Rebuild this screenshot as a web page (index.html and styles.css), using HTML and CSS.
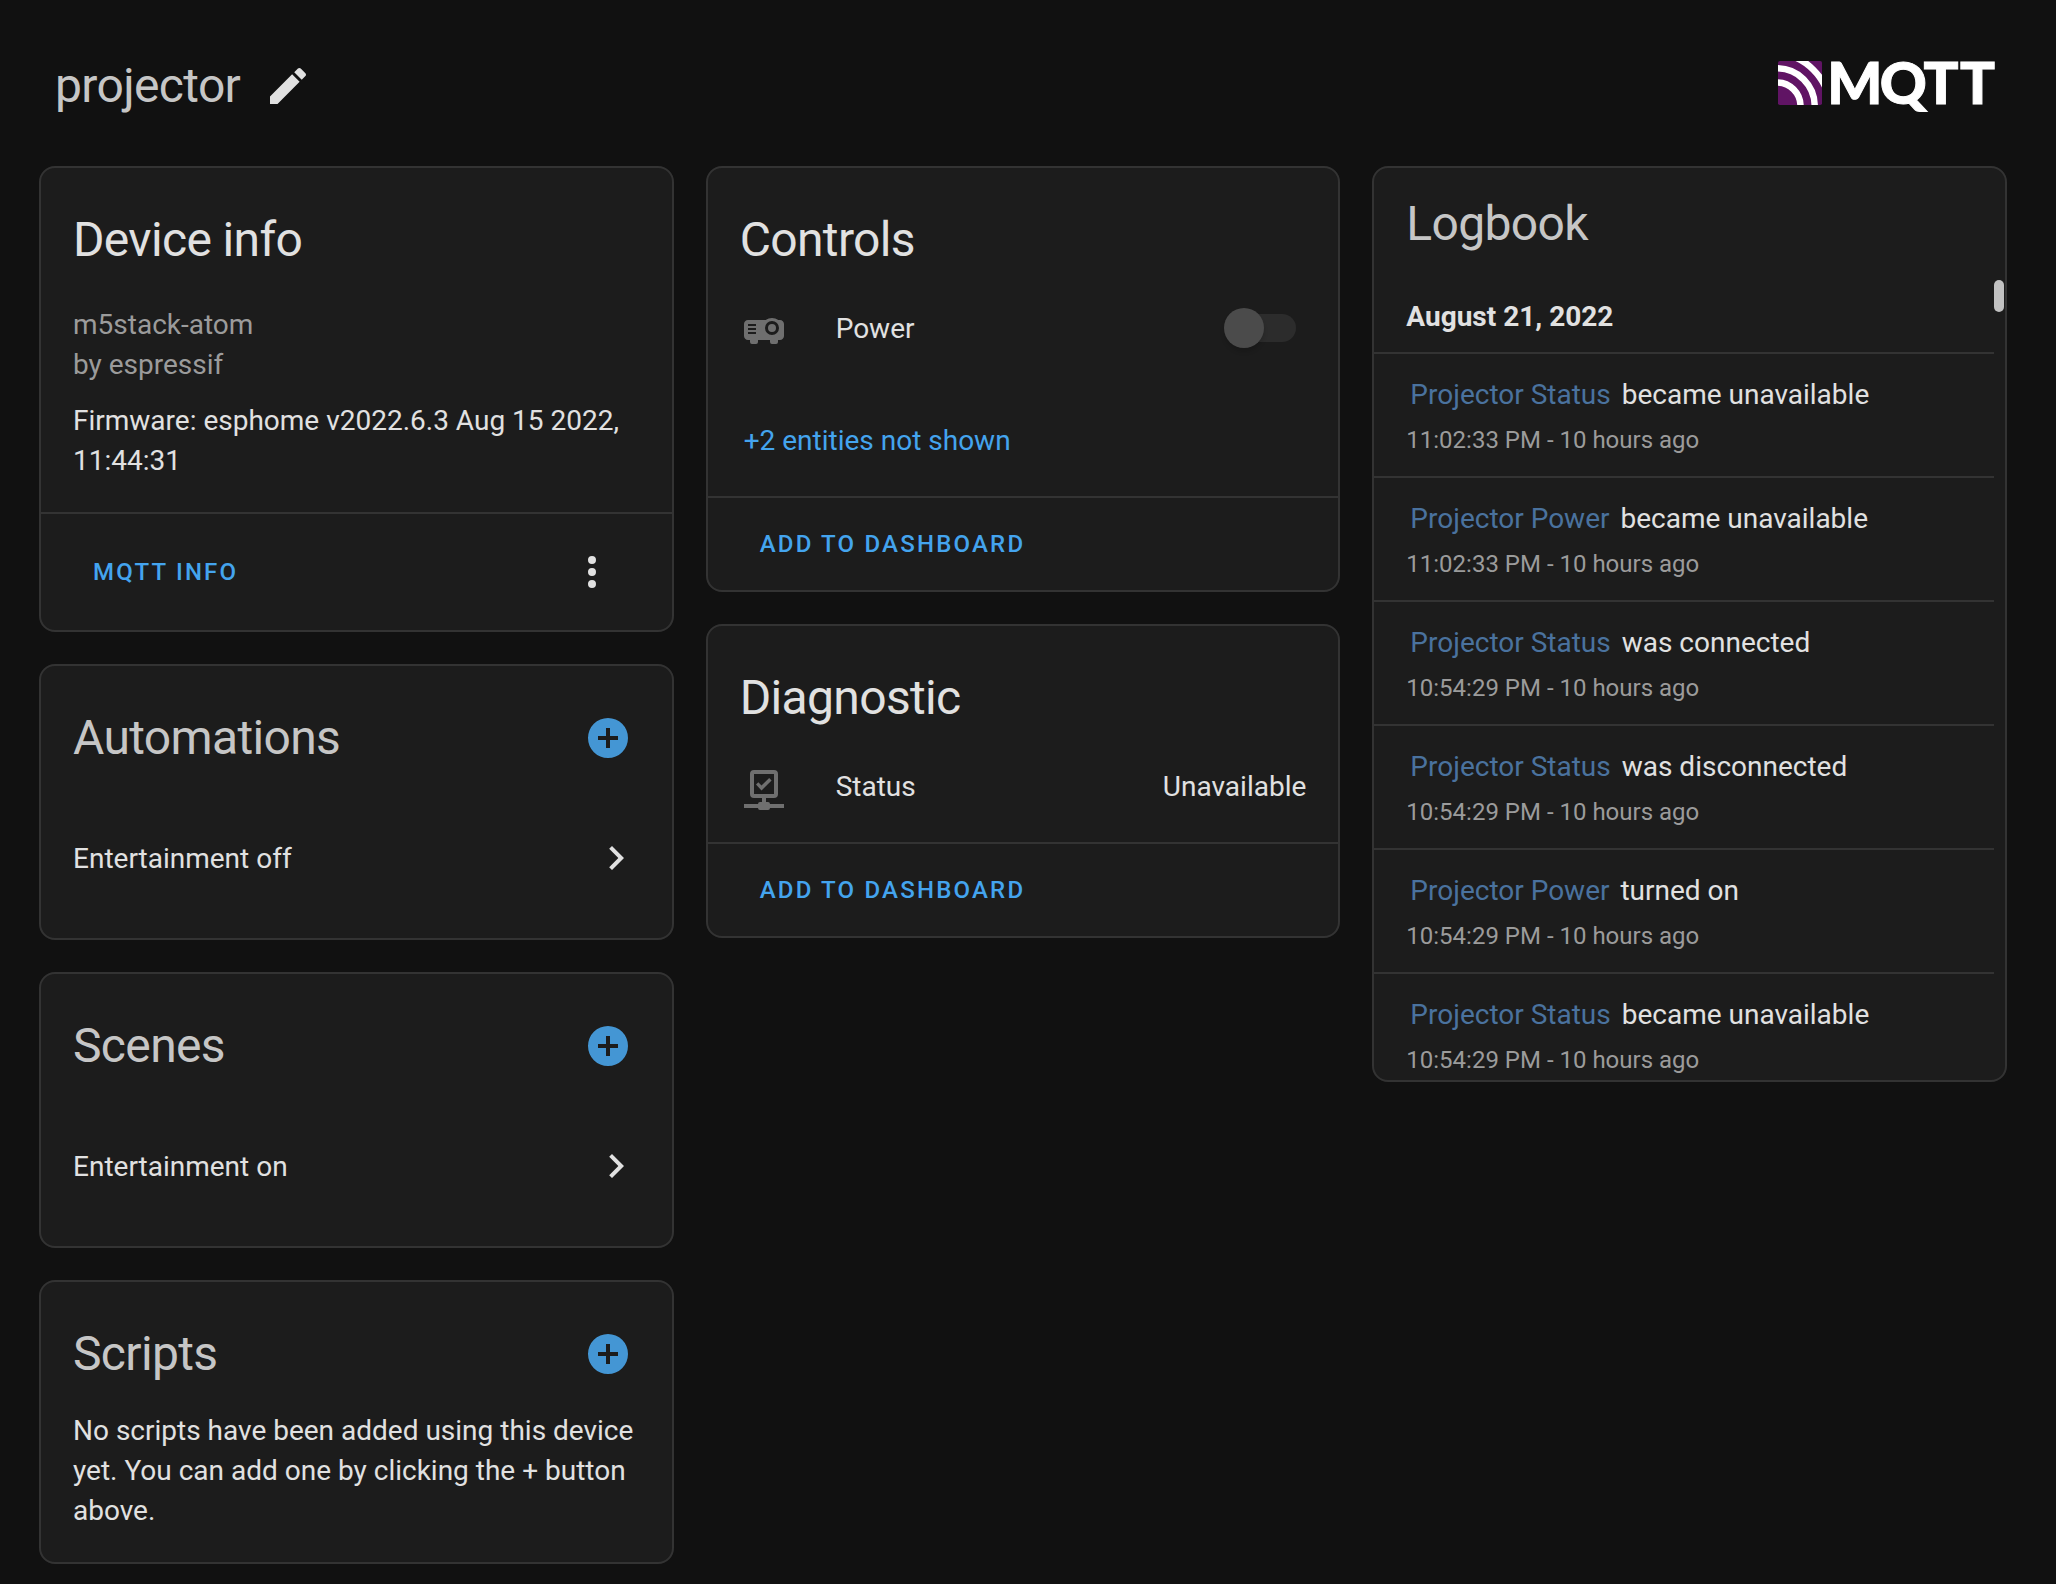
FILE: index.html
```html
<!DOCTYPE html>
<html lang="en">
<head>
<meta charset="utf-8">
<title>projector</title>
<link rel="stylesheet" href="styles.css">
</head>
<body>
<svg class="defs" width="0" height="0" aria-hidden="true">
  <symbol id="plus-circle" viewBox="0 0 24 24"><path d="M17,13H13V17H11V13H7V11H11V7H13V11H17M12,2A10,10 0 0,0 2,12A10,10 0 0,0 12,22A10,10 0 0,0 22,12A10,10 0 0,0 12,2Z"/></symbol>
  <symbol id="chevron" viewBox="0 0 24 24"><path d="M8.59,16.58L13.17,12L8.59,7.41L10,6L16,12L10,18L8.59,16.58Z"/></symbol>
</svg>
<header class="header">
  <h1 class="title">projector</h1>
  <svg class="icon" viewBox="0 0 24 24"><path d="M20.71,7.04C21.1,6.65 21.1,6 20.71,5.63L18.37,3.29C18,2.9 17.35,2.9 16.96,3.29L15.12,5.12L18.87,8.87M3,17.25V21H6.75L17.81,9.93L14.06,6.18L3,17.25Z"/></svg>
  <svg class="logo" viewBox="0 -18 218 87">
    <clipPath id="tile"><rect x="0" y="0" width="44" height="44" rx="1.8"/></clipPath>
    <g clip-path="url(#tile)">
      <rect class="logo-tile" width="44" height="44"/>
      <circle class="logo-wave" cx="-1" cy="45" r="23.5"/>
      <circle class="logo-wave" cx="-1" cy="45" r="37.7"/>
      <circle class="logo-wave" cx="-5" cy="49" r="57"/>
    </g>
    <text class="logo-text" y="42.600" x="49.300 101.800 145.600 182">MQTT</text>
  </svg>
</header>
<main class="columns">
  <div class="column">
    <section class="card">
      <h2 class="card-title">Device info</h2>
      <div class="device">
        <p class="muted">m5stack-atom<br>by espressif</p>
        <p>Firmware: esphome v2022.6.3 Aug 15 2022, 11:44:31</p>
      </div>
      <footer class="actions actions-tall">
        <a class="button">MQTT Info</a>
        <svg class="icon" viewBox="0 0 24 24"><path d="M12,16A2,2 0 0,1 14,18A2,2 0 0,1 12,20A2,2 0 0,1 10,18A2,2 0 0,1 12,16M12,10A2,2 0 0,1 14,12A2,2 0 0,1 12,14A2,2 0 0,1 10,12A2,2 0 0,1 12,10M12,4A2,2 0 0,1 14,6A2,2 0 0,1 12,8A2,2 0 0,1 10,6A2,2 0 0,1 12,4Z"/></svg>
      </footer>
    </section>
    <section class="card">
      <h2 class="card-title dim">Automations<svg class="icon add"><use href="#plus-circle"/></svg></h2>
      <div class="link-row"><span>Entertainment off</span><svg class="icon"><use href="#chevron"/></svg></div>
    </section>
    <section class="card">
      <h2 class="card-title dim">Scenes<svg class="icon add"><use href="#plus-circle"/></svg></h2>
      <div class="link-row"><span>Entertainment on</span><svg class="icon"><use href="#chevron"/></svg></div>
    </section>
    <section class="card">
      <h2 class="card-title dim">Scripts<svg class="icon add"><use href="#plus-circle"/></svg></h2>
      <p class="empty">No scripts have been added using this device yet. You can add one by clicking the + button above.</p>
    </section>
  </div>
  <div class="column">
    <section class="card">
      <h2 class="card-title">Controls</h2>
      <div class="entity">
        <svg class="icon state" viewBox="0 0 24 24"><path d="M16,6C14.87,6 13.77,6.35 12.84,7H4C2.89,7 2,7.89 2,9V15C2,16.11 2.89,17 4,17H5V18A1,1 0 0,0 6,19H8A1,1 0 0,0 9,18V17H15V18A1,1 0 0,0 16,19H18A1,1 0 0,0 19,18V17H20C21.11,17 22,16.11 22,15V9C22,7.89 21.11,7 20,7H19.15C18.23,6.35 17.13,6 16,6M16,7.5A3.5,3.5 0 0,1 19.5,11A3.5,3.5 0 0,1 16,14.5A3.5,3.5 0 0,1 12.5,11A3.5,3.5 0 0,1 16,7.5M4,9H8V10H4V9M16,9A2,2 0 0,0 14,11A2,2 0 0,0 16,13A2,2 0 0,0 18,11A2,2 0 0,0 16,9M4,11H8V12H4V11M4,13H8V14H4V13Z"/></svg>
        <span class="name">Power</span>
        <span class="toggle"><span class="knob"></span></span>
      </div>
      <a class="more">+2 entities not shown</a>
      <footer class="actions"><a class="button">Add to dashboard</a></footer>
    </section>
    <section class="card">
      <h2 class="card-title">Diagnostic</h2>
      <div class="entity entity-last">
        <svg class="icon state" viewBox="0 0 24 24"><path d="M15,20A1,1 0 0,0 14,19H13V17H17A2,2 0 0,0 19,15V5A2,2 0 0,0 17,3H7A2,2 0 0,0 5,5V15A2,2 0 0,0 7,17H11V19H10A1,1 0 0,0 9,20H2V22H9A1,1 0 0,0 10,23H14A1,1 0 0,0 15,22H22V20H15M7,15V5H17V15H7M10.75,13.3L8,10.3L9.16,9.14L10.75,10.73L14.59,6.95L15.8,8.3L10.75,13.3Z"/></svg>
        <span class="name">Status</span>
        <span class="value">Unavailable</span>
      </div>
      <footer class="actions"><a class="button">Add to dashboard</a></footer>
    </section>
  </div>
  <div class="column">
    <section class="card logbook">
      <h2 class="log-title dim">Logbook</h2>
      <div class="log">
        <h3 class="date">August 21, 2022</h3>
        <div class="entry"><p><a class="entity-link">Projector Status</a> became unavailable</p><p class="when">11:02:33 PM - 10 hours ago</p></div>
        <div class="entry"><p><a class="entity-link">Projector Power</a> became unavailable</p><p class="when">11:02:33 PM - 10 hours ago</p></div>
        <div class="entry"><p><a class="entity-link">Projector Status</a> was connected</p><p class="when">10:54:29 PM - 10 hours ago</p></div>
        <div class="entry"><p><a class="entity-link">Projector Status</a> was disconnected</p><p class="when">10:54:29 PM - 10 hours ago</p></div>
        <div class="entry"><p><a class="entity-link">Projector Power</a> turned on</p><p class="when">10:54:29 PM - 10 hours ago</p></div>
        <div class="entry"><p><a class="entity-link">Projector Status</a> became unavailable</p><p class="when">10:54:29 PM - 10 hours ago</p></div>
        <span class="scroll-thumb"></span>
      </div>
    </section>
  </div>
</main>
</body>
</html>
```
FILE: styles.css
```css
* { box-sizing: border-box; }

body {
  margin: 0;
  height: 1584px;
  overflow: hidden;
  background: #111;
  color: #e1e1e1;
  font: 28px/40px Roboto, sans-serif;
}

h1, h2, h3, p { margin: 0; font-weight: 400; }

.defs { display: block; }

.icon { flex: none; width: 48px; height: 48px; fill: currentColor; }

.header {
  display: flex;
  align-items: center;
  height: 166px;
  padding: 6px 60px 0 55px;
}

.title {
  margin-right: 24px;
  color: #c6c6c6;
  font-size: 48px;
  line-height: 64px;
  letter-spacing: -0.0135em;
}

.logo { width: 218px; height: 87px; margin-left: auto; overflow: visible; }
.logo-tile { fill: #601464; }
.logo-wave { fill: none; stroke: #fff; stroke-width: 6.5; }
.logo-text {
  fill: #fff;
  stroke: #fff;
  stroke-width: 1;
  font: 900 58px Lato, sans-serif;
}

.columns {
  display: grid;
  grid-template-columns: repeat(3, 1fr);
  align-items: start;
  gap: 32px;
  padding: 0 49px 0 39px;
}

.column { display: grid; gap: 32px; }

.card {
  overflow: hidden;
  background: #1c1c1c;
  border: 2px solid #333;
  border-radius: 16px;
}

.card-title {
  display: flex;
  align-items: center;
  justify-content: space-between;
  height: 128px;
  padding: 16px 40px 0 32px;
  font-size: 48px;
  letter-spacing: -0.0135em;
}

.dim { color: #c6c6c6; }
.add { color: #4496d4; }

.device { height: 216px; padding: 9px 32px 0; }
.muted { margin-bottom: 16px; color: #9b9b9b; }

.actions {
  display: flex;
  align-items: center;
  justify-content: space-between;
  height: 94px;
  padding: 0 56px 0 52px;
  border-top: 2px solid #333;
}
.actions-tall { height: 118px; }

.button {
  color: #44a4ee;
  font-size: 24px;
  font-weight: 500;
  letter-spacing: 0.0915em;
  text-transform: uppercase;
}

.link-row {
  display: flex;
  align-items: center;
  justify-content: space-between;
  height: 144px;
  padding: 0 32px 16px;
}
.link-row span { padding-top: 2px; }

.empty { height: 152px; padding: 1px 32px 0; }

.entity {
  display: flex;
  align-items: center;
  height: 64px;
  padding: 0 32px;
}
.entity-last { height: 88px; padding-bottom: 24px; }
.state { margin-top: 4px; color: #6f6f6f; }
.name { margin: 0 auto 0 48px; padding-top: 2px; }
.value { padding-top: 2px; }

.toggle {
  display: flex;
  align-items: center;
  width: 64px;
  height: 28px;
  margin-right: 10px;
  border-radius: 14px;
  background: #2c2c2c;
}
.knob {
  flex: none;
  width: 40px;
  height: 40px;
  margin-left: -8px;
  border-radius: 50%;
  background: #4b4b4b;
  box-shadow: 0 4px 4px rgba(0, 0, 0, .14);
}

.more {
  display: flex;
  align-items: center;
  height: 136px;
  padding: 26px 36px 0;
  color: #44a4ee;
}

.logbook { height: 916px; }
.log-title {
  height: 110px;
  padding: 24px 32px 0;
  font-size: 48px;
  line-height: 64px;
  letter-spacing: -0.0135em;
}
.log { position: relative; padding-right: 11px; }
.date {
  height: 74px;
  padding: 19px 32px 0;
  font-size: 28px;
  font-weight: 700;
}
.entry {
  height: 124px;
  padding: 21px 32px 0;
  border-top: 2px solid #333;
}
.entity-link { margin: 0 4px; color: #4a729e; }
.when { margin-top: 5px; color: #9b9b9b; font-size: 24px; }

.scroll-thumb {
  position: absolute;
  top: 2px;
  right: 1px;
  width: 10px;
  height: 32px;
  border-radius: 5px;
  background: #c1c1c1;
}
```
